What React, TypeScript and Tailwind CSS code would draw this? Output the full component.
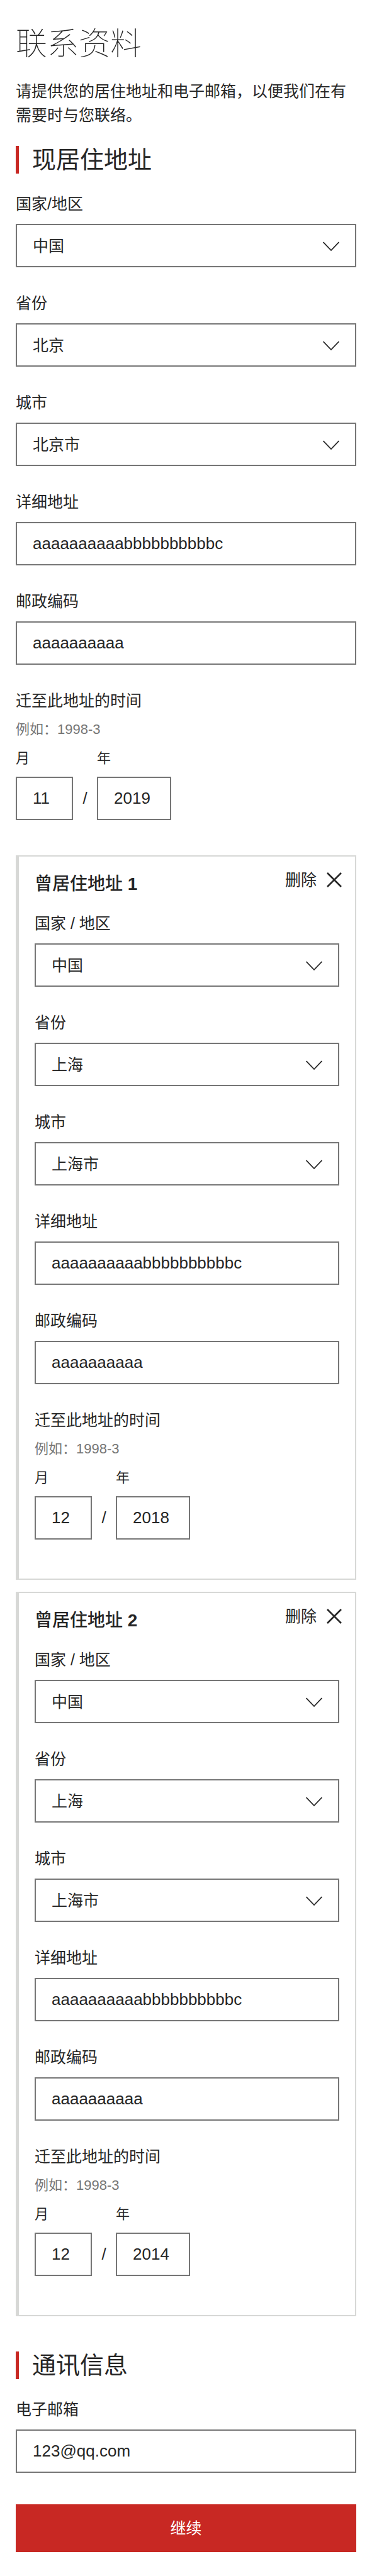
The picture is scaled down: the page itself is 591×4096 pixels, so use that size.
import { useId, type ReactNode } from "react";

type Address = {
  country: string;
  province: string;
  city: string;
  street: string;
  postcode: string;
  month: string;
  year: string;
};

const current: Address = {
  country: "中国",
  province: "北京",
  city: "北京市",
  street: "aaaaaaaaaabbbbbbbbbbc",
  postcode: "aaaaaaaaaa",
  month: "11",
  year: "2019",
};

const previous: Address[] = [
  {
    country: "中国",
    province: "上海",
    city: "上海市",
    street: "aaaaaaaaaabbbbbbbbbbc",
    postcode: "aaaaaaaaaa",
    month: "12",
    year: "2018",
  },
  {
    country: "中国",
    province: "上海",
    city: "上海市",
    street: "aaaaaaaaaabbbbbbbbbbc",
    postcode: "aaaaaaaaaa",
    month: "12",
    year: "2014",
  },
];

const control =
  "block h-[69px] w-full appearance-none rounded-none border-2 border-[#767676] bg-white px-[25px] text-[#262626] outline-none focus:border-[#262626]";

function SelectField({ label, value }: { label: string; value: string }) {
  const id = useId();
  return (
    <div>
      <label htmlFor={id} className="mb-[13px] block text-[25px] leading-[38px]">
        {label}
      </label>
      <div className="relative">
        <select id={id} defaultValue={value} className={`${control} pt-0.5 text-[25px]`}>
          <option value={value}>{value}</option>
        </select>
        <svg
          aria-hidden="true"
          viewBox="0 0 26 16"
          className="pointer-events-none absolute top-7 right-[27px] h-4 w-[26px]"
          fill="none"
          stroke="#262626"
          strokeWidth="1.8"
        >
          <path d="M0.6 1 L13 14 L25.4 1" />
        </svg>
      </div>
    </div>
  );
}

function TextField({ label, value, type = "text" }: { label: string; value: string; type?: string }) {
  const id = useId();
  return (
    <div>
      <label htmlFor={id} className="mb-[13px] block text-[25px] leading-[38px]">
        {label}
      </label>
      <input id={id} type={type} defaultValue={value} className={`${control} text-[26px]`} />
    </div>
  );
}

function DateField({ month, year }: { month: string; year: string }) {
  const id = useId();
  return (
    <div role="group" aria-labelledby={`${id}-title`}>
      <p id={`${id}-title`} className="text-[25px] leading-[38px]">
        迁至此地址的时间
      </p>
      <p className="mt-[11px] text-[22px] leading-8 text-[#767676]">例如：1998-3</p>
      <div className="mt-[14px] flex items-end">
        <div className="w-[91px]">
          <label htmlFor={`${id}-month`} className="mb-[13px] block text-[22px] leading-8">
            月
          </label>
          <input id={`${id}-month`} inputMode="numeric" defaultValue={month} className={`${control} text-[26px]`} />
        </div>
        <span className="w-[38px] text-center text-[26px] leading-[69px]">/</span>
        <div className="w-[118px]">
          <label htmlFor={`${id}-year`} className="mb-[13px] block text-[22px] leading-8">
            年
          </label>
          <input id={`${id}-year`} inputMode="numeric" defaultValue={year} className={`${control} text-[26px]`} />
        </div>
      </div>
    </div>
  );
}

function AddressFields({ address, countryLabel }: { address: Address; countryLabel: string }) {
  return (
    <div className="flex flex-col gap-[38px]">
      <SelectField label={countryLabel} value={address.country} />
      <SelectField label="省份" value={address.province} />
      <SelectField label="城市" value={address.city} />
      <TextField label="详细地址" value={address.street} />
      <TextField label="邮政编码" value={address.postcode} />
      <DateField month={address.month} year={address.year} />
    </div>
  );
}

function SectionHeading({ children }: { children: ReactNode }) {
  return (
    <h2 className="mb-[29px] border-l-[5px] border-[#c82823] pl-[21px] text-[38px] leading-[44px] font-normal">
      {children}
    </h2>
  );
}

function PreviousAddress({ index, address }: { index: number; address: Address }) {
  return (
    <section className="border-2 border-l-[5px] border-[#d7d8d6] px-[25px] pt-[23px] pb-[62px]">
      <div className="mb-[22px] flex items-start justify-between">
        <h3 className="text-[28px] leading-[42px] font-medium">
          曾居住地址 <span className="font-bold">{index}</span>
        </h3>
        <button type="button" className="-mr-1 flex items-center gap-4 text-[25px] leading-7">
          删除
          <svg
            aria-hidden="true"
            viewBox="0 0 24 24"
            className="h-6 w-6"
            fill="none"
            stroke="#262626"
            strokeWidth="2.6"
          >
            <path d="M1 1 L23 23 M23 1 L1 23" />
          </svg>
        </button>
      </div>
      <AddressFields address={address} countryLabel="国家 / 地区" />
    </section>
  );
}

export default function App() {
  return (
    <main
      lang="zh-CN"
      className="bg-white px-[25px] pt-[45px] pb-[38px] font-['Liberation_Sans','Noto_Sans_CJK_SC',sans-serif] text-[#262626]"
    >
      <h1 className="text-[50px] leading-[50px] font-thin">联系资料</h1>
      <p className="mt-[31px] mb-[30px] text-[25px] leading-[38px]">
        请提供您的居住地址和电子邮箱，以便我们在有需要时与您联络。
      </p>
      <form onSubmit={(event) => event.preventDefault()}>
        <SectionHeading>现居住地址</SectionHeading>
        <AddressFields address={current} countryLabel="国家/地区" />
        <div className="my-14 flex flex-col gap-[19px]">
          {previous.map((address, i) => (
            <PreviousAddress key={i} index={i + 1} address={address} />
          ))}
        </div>
        <SectionHeading>通讯信息</SectionHeading>
        <TextField label="电子邮箱" value="123@qq.com" type="email" />
        <button type="submit" className="mt-[50px] block h-[76px] w-full bg-[#c82823] pt-0.5 text-[25px] text-white">
          继续
        </button>
      </form>
    </main>
  );
}
